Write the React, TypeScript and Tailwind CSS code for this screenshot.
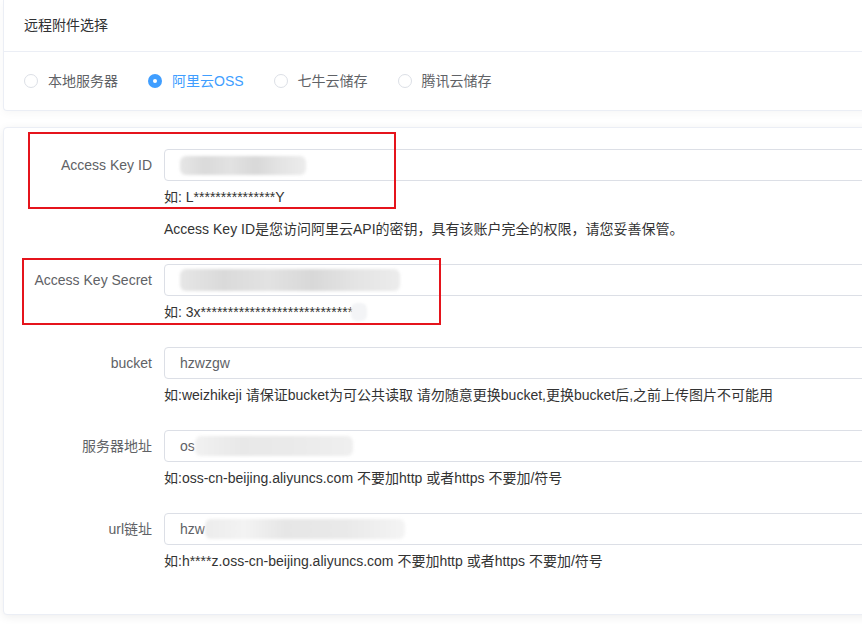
import { ReactNode } from 'react';

const font = { fontFamily: '"Liberation Sans", "Noto Sans CJK SC", sans-serif' };

const storages = ['本地服务器', '阿里云OSS', '七牛云储存', '腾讯云储存'];

function Radio({ label, checked }: { label: string; checked?: boolean }) {
  return (
    <label className="flex items-center">
      {checked ? (
        <span className="flex h-[14px] w-[14px] items-center justify-center rounded-full bg-[#409eff]">
          <span className="h-[4px] w-[4px] rounded-full bg-white" />
        </span>
      ) : (
        <span className="h-[14px] w-[14px] rounded-full border border-[#dcdfe6] bg-white" />
      )}
      <span className={`pl-[10px] text-[14px] ${checked ? 'text-[#409eff]' : 'text-[#606266]'}`}>{label}</span>
    </label>
  );
}

// 打码的部分
function Blur({ className }: { className: string }) {
  return (
    <span
      className={`inline-block rounded-[6px] bg-[linear-gradient(90deg,#e6e6e6,#dadada_20%,#e2e2e2_40%,#d8d8d8_60%,#e4e4e4_80%,#ececec)] blur-[1.5px] ${className}`}
    />
  );
}

interface FormItemProps {
  label: string;
  value?: ReactNode;
  tips: ReactNode[];
}

function FormItem({ label, value, tips }: FormItemProps) {
  return (
    <div className="mb-[25px] flex">
      <div className="w-[160px] shrink-0 pr-[12px] text-right text-[14px] leading-8 text-[#606266]">{label}</div>
      <div className="flex-1">
        <div className="flex h-8 items-center overflow-hidden rounded-[4px] border border-[#dcdfe6] bg-white pl-[15px] text-[14px] text-[#606266]">
          {value}
        </div>
        {tips.map((tip, i) => (
          <div key={i} className={`${i === 0 ? 'mt-[6px]' : 'mt-[12px]'} flex items-center text-[14px] leading-5 text-[#333]`}>
            {tip}
          </div>
        ))}
      </div>
    </div>
  );
}

export default function App() {
  return (
    <div className="relative h-[632px] w-[862px] overflow-hidden bg-white" style={font}>
      <div className="w-[900px] pl-[3px]">
        {/* 远程附件选择 */}
        <div className="rounded-b-[4px] border border-t-0 border-[#ebeef5] bg-white shadow-[0_2px_10px_0_rgba(0,0,0,0.04)]">
          <div className="flex h-[52px] items-center border-b border-[#ebeef5] pl-[20px] text-[14px] text-[#303133]">
            远程附件选择
          </div>
          <div className="flex h-[58px] items-center gap-[30px] pl-[20px]">
            {storages.map((s) => (
              <Radio key={s} label={s} checked={s === '阿里云OSS'} />
            ))}
          </div>
        </div>

        <div className="mt-[16px] rounded-[4px] border border-[#ebeef5] bg-white pb-[18px] pt-[21px] shadow-[0_2px_10px_0_rgba(0,0,0,0.07)]">
          <FormItem
            label="Access Key ID"
            value={<Blur className="h-[19px] w-[126px]" />}
            tips={['如: L***************Y', 'Access Key ID是您访问阿里云API的密钥，具有该账户完全的权限，请您妥善保管。']}
          />
          <FormItem
            label="Access Key Secret"
            value={<Blur className="h-[22px] w-[220px]" />}
            tips={[
              <>
                如: 3x****************************
                <span className="ml-[-2px] inline-block h-[18px] w-[16px] rounded-[6px] bg-[#f3f4f6] blur-[1px]" />
              </>,
            ]}
          />
          <FormItem
            label="bucket"
            value="hzwzgw"
            tips={['如:weizhikeji 请保证bucket为可公共读取 请勿随意更换bucket,更换bucket后,之前上传图片不可能用']}
          />
          <FormItem
            label="服务器地址"
            value={
              <>
                os
                <Blur className="h-[20px] w-[158px] bg-[linear-gradient(90deg,#f1f1f1,#e8e8e8_30%,#eaeaea_60%,#efefef)]" />
              </>
            }
            tips={['如:oss-cn-beijing.aliyuncs.com 不要加http 或者https 不要加/符号']}
          />
          <FormItem
            label="url链址"
            value={
              <>
                hzw
                <Blur className="h-[20px] w-[200px] bg-[linear-gradient(90deg,#ececec,#f3f3f3_20%,#e6e6e6_40%,#e9e9e9_70%,#f4f4f4)]" />
              </>
            }
            tips={['如:h****z.oss-cn-beijing.aliyuncs.com 不要加http 或者https 不要加/符号']}
          />
        </div>
      </div>

      {/* 红框标注 */}
      <div className="pointer-events-none absolute left-[28px] top-[132px] h-[77px] w-[368px] border-2 border-[#e5141c]" />
      <div className="pointer-events-none absolute left-[22px] top-[258px] h-[67px] w-[419px] border-2 border-[#e5141c]" />
    </div>
  );
}
